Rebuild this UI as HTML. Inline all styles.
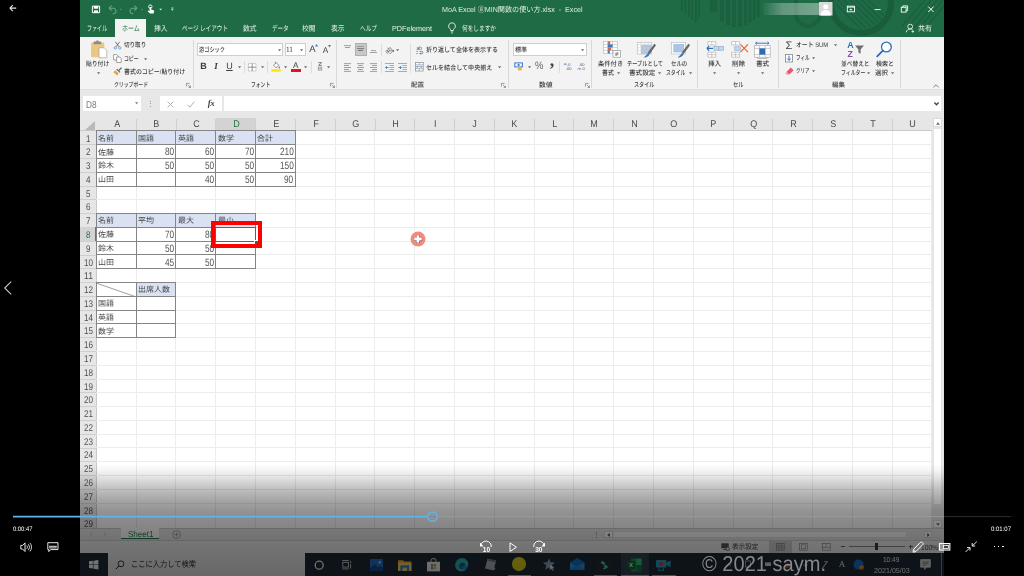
<!DOCTYPE html>
<html lang="ja"><head><meta charset="utf-8"><title>MoA Excel MIN関数の使い方</title>
<style>
html,body{margin:0;padding:0;background:#000;}
body{width:1024px;height:576px;overflow:hidden;position:relative;font-family:"Liberation Sans","Noto Sans CJK JP",sans-serif;}
#root{position:absolute;left:0;top:0;width:1024px;height:576px;overflow:hidden;background:#000;}
#v{position:absolute;left:80px;top:0;width:864px;height:576px;overflow:hidden;background:#fff;}
.a{position:absolute;}
.t{position:absolute;white-space:pre;line-height:1;text-rendering:geometricPrecision;}
svg{position:absolute;overflow:visible;}
</style></head><body><div id="root">
<div class="a" id="clip" style="left:80px;top:0;width:864px;height:576px;overflow:hidden;background:#fff"><div class="a" id="vid" style="left:-80px;top:0;width:1024px;height:576px;filter:blur(.5px)">
<div class="a" style="left:60px;top:-20px;width:904px;height:616px;background:#fff;"></div>
<div class="a" style="left:60px;top:-20px;width:904px;height:56.6px;background:#1f6b45;"></div>
<svg class="a" style="left:660px;top:0;overflow:hidden" width="284" height="36.600" viewBox="660 0 284 36.600"><defs><clipPath id="cc"><circle cx="861" cy="3" r="26"/></clipPath></defs><g fill="#1b6040"><rect x="681" y="0" width="1.600" height="11"/><rect x="684.500" y="0" width="1.600" height="14"/><rect x="688" y="0" width="1.600" height="17"/><rect x="691.500" y="0" width="1.600" height="20"/><rect x="695" y="0" width="1.600" height="23"/><rect x="698.300" y="0" width="1.600" height="18"/><rect x="710" y="0" width="7" height="12"/><rect x="720" y="0" width="4" height="21"/><rect x="726" y="0" width="4" height="25"/><rect x="732" y="0" width="4" height="27"/><rect x="738" y="0" width="4" height="27"/><rect x="744" y="0" width="3" height="25"/><rect x="748.500" y="0" width="3" height="23"/><rect x="753" y="0" width="2.500" height="20"/><rect x="757" y="0" width="2.500" height="17"/></g><path d="M796 0v14a12 12 0 0 0 24 0V0" fill="none" stroke="#1b6040" stroke-width="4"/><circle cx="861" cy="3" r="30" fill="none" stroke="#1a5d3d" stroke-width="6"/><g clip-path="url(#cc)" stroke="#1b6040" stroke-width="1.600"><path d="M850 -6l40 40M844 -6l40 40M838 -6l40 40M832 -6l40 40M826 -6l40 40M856 -6l40 40M862 -6l40 40"/></g><g stroke="#1b6040" stroke-width="1.400"><path d="M925 0L902 26M931 0l-24 28M937 0l-23 28M943 0l-22 26M949 0l-20 24"/></g></svg>
<svg class="a" style="left:88px;top:2px" width="100" height="16" viewBox="88 2 100 16"><path d="M92.400 6.100h7.200v6.600h-7.200z" fill="none" stroke="#fff" stroke-width="1"/><rect x="93.800" y="6.100" width="4.400" height="2.600" fill="#fff"/><rect x="94" y="10.400" width="4" height="2.300" fill="#fff"/><path d="M109 8.2l2.6-2.6M109 8.2l2.6 2.4M109.3 8.2h4.6a2.9 2.9 0 0 1 0 5.6h-1.2" fill="none" stroke="#6aa588" stroke-width="1.1"/><path d="M120 9l1 1.2 1-1.2z" fill="#6aa588"/><path d="M137 8.2l-2.6-2.6M137 8.2l-2.6 2.4M136.7 8.2h-4.6a2.9 2.9 0 0 0 0 5.6h1.2" fill="none" stroke="#6aa588" stroke-width="1.1"/><path d="M141 9l1 1.2 1-1.2z" fill="#6aa588"/><circle cx="150.3" cy="6.6" r="1.7" fill="none" stroke="#fff" stroke-width="0.9"/><path d="M149.6 7v4l-1.4-.6-.5.8 2.3 2.4h3.6l.6-3-3-1.1V7z" fill="#fff"/><path d="M159.2 8.8l1.4 1.5 1.4-1.5z" fill="#fff"/><path d="M171 8h2.6" stroke="#dfe" stroke-width="0.7"/><path d="M171 9.2l1.3 1.5 1.3-1.5z" fill="#e8f3ec"/></svg>
<span class="t" style="top:5.9px;font-size:7.4px;color:#dcebe2;left:441.55px;transform:scaleX(0.964);transform-origin:0 50%;">MoA Excel ⑧MIN関数の使い方.xlsx  -  Excel</span>
<div class="a" style="left:763px;top:2.5px;width:56px;height:12.5px;background:linear-gradient(90deg,rgba(255,255,255,0.04),rgba(255,255,255,0.30) 35%,rgba(255,255,255,0.40));filter:blur(0.6px)"></div>
<svg class="a" style="left:819px;top:2px" width="13.5" height="13.5" viewBox="0 0 27 27"><rect width="27" height="27" fill="#d9d9d9"/><circle cx="13.5" cy="9.500" r="5" fill="#fff"/><path d="M3.500 27c0-8 4-11 10-11s10 3 10 11z" fill="#fff"/></svg>
<svg class="a" style="left:840px;top:2px" width="104" height="16" viewBox="840 2 104 16"><rect x="847.3" y="6.2" width="7.2" height="5.6" fill="none" stroke="#fff" stroke-width="0.9"/><path d="M849.2 10.3l1.7-1.9 1.7 1.9z" fill="#fff"/><path d="M847.3 7.2h7.2" stroke="#fff" stroke-width="0.8"/><path d="M874.6 9.6h6" stroke="#fff" stroke-width="0.9"/><rect x="901.3" y="7.3" width="4.8" height="4.8" fill="none" stroke="#fff" stroke-width="0.9"/><path d="M902.8 7.3v-1.4h4.8v4.8h-1.5" fill="none" stroke="#fff" stroke-width="0.9"/><path d="M928.2 6.6l5.4 5.4M933.6 6.6l-5.4 5.4" stroke="#fff" stroke-width="1"/></svg>
<div class="a" style="left:114.8px;top:19.4px;width:31.3px;height:17.4px;background:#f3f3f3;"></div>
<span class="t" style="top:25px;font-size:7.4px;color:#e6f1ea;left:87.00px;transform:scaleX(0.683);transform-origin:0 50%;">ファイル</span>
<span class="t" style="top:25px;font-size:7.4px;color:#1f6b45;left:121.60px;transform:scaleX(0.811);transform-origin:0 50%;">ホーム</span>
<span class="t" style="top:25px;font-size:7.4px;color:#e6f1ea;left:154.00px;transform:scaleX(0.919);transform-origin:0 50%;">挿入</span>
<span class="t" style="top:25px;font-size:7.4px;color:#e6f1ea;left:182.00px;transform:scaleX(0.754);transform-origin:0 50%;">ページ レイアウト</span>
<span class="t" style="top:25px;font-size:7.4px;color:#e6f1ea;left:242.50px;transform:scaleX(0.919);transform-origin:0 50%;">数式</span>
<span class="t" style="top:25px;font-size:7.4px;color:#e6f1ea;left:271.50px;transform:scaleX(0.748);transform-origin:0 50%;">データ</span>
<span class="t" style="top:25px;font-size:7.4px;color:#e6f1ea;left:302.00px;transform:scaleX(0.919);transform-origin:0 50%;">校閲</span>
<span class="t" style="top:25px;font-size:7.4px;color:#e6f1ea;left:331.00px;transform:scaleX(0.919);transform-origin:0 50%;">表示</span>
<span class="t" style="top:25px;font-size:7.4px;color:#e6f1ea;left:359.50px;transform:scaleX(0.766);transform-origin:0 50%;">ヘルプ</span>
<span class="t" style="top:25px;font-size:7.4px;color:#e6f1ea;left:391.50px;transform:scaleX(0.974);transform-origin:0 50%;">PDFelement</span>
<svg class="a" style="left:447px;top:22px" width="10" height="12" viewBox="0 0 10 12"><path d="M5 .8a3.3 3.3 0 0 0-2 6c.5.5.7 1 .7 1.7h2.6c0-.7.2-1.2.7-1.700A3.300 3.300 0 0 0 5 .8z" fill="none" stroke="#fff" stroke-width="0.8"/><path d="M3.800 9.800h2.400M4.200 11h1.600" stroke="#fff" stroke-width="0.7"/></svg>
<span class="t" style="top:25px;font-size:7.4px;color:#e6f1ea;left:462.40px;transform:scaleX(0.766);transform-origin:0 50%;">何をしますか</span>
<svg class="a" style="left:905px;top:23px" width="10" height="10" viewBox="0 0 10 10"><circle cx="5.2" cy="3.6" r="2.4" fill="none" stroke="#fff" stroke-width="0.8"/><path d="M1.300 9.300c.3-2.200 1.800-3.300 3.900-3.300 1 0 1.700.2 2.300.6" fill="none" stroke="#fff" stroke-width="0.8"/><path d="M7.800 7.200v2.600M6.500 8.500h2.600" stroke="#fff" stroke-width="0.7"/></svg>
<span class="t" style="top:25px;font-size:7.4px;color:#e6f1ea;left:918.00px;transform:scaleX(0.946);transform-origin:0 50%;">共有</span>
<div class="a" style="left:60px;top:36.6px;width:904px;height:52.2px;background:#f3f3f3;"></div>
<div class="a" style="left:60px;top:88.8px;width:904px;height:1px;background:#e0e0e0;"></div>
<div class="a" style="left:192.6px;top:39.5px;width:0.9px;height:48px;background:#d9d9d9;"></div>
<div class="a" style="left:336.1px;top:39.5px;width:0.9px;height:48px;background:#d9d9d9;"></div>
<div class="a" style="left:508.1px;top:39.5px;width:0.9px;height:48px;background:#d9d9d9;"></div>
<div class="a" style="left:591.4px;top:39.5px;width:0.9px;height:48px;background:#d9d9d9;"></div>
<div class="a" style="left:697px;top:39.5px;width:0.9px;height:48px;background:#d9d9d9;"></div>
<div class="a" style="left:777.6px;top:39.5px;width:0.9px;height:48px;background:#d9d9d9;"></div>
<div class="a" style="left:900px;top:39.5px;width:0.9px;height:48px;background:#d9d9d9;"></div>
<svg class="a" style="left:90px;top:40px" width="18" height="20" viewBox="0 0 18 20"><rect x="1" y="2.600" width="13.200" height="14.600" rx=".8" fill="#ecc682"/><rect x="3.600" y="1.600" width="7.600" height="2.600" rx=".5" fill="#8a8a8a"/><rect x="6.200" y=".6" width="2.400" height="1.600" rx=".5" fill="#8a8a8a"/><path d="M9 7.800h5.200l2.600 2.600v7.400H9z" fill="#fff" stroke="#a2a2a2" stroke-width=".7"/></svg>
<span class="t" style="top:61.9px;font-size:6.6px;color:#3b3b3b;font-weight:500;left:85.80px;transform:scaleX(0.880);transform-origin:0 50%;">貼り付け</span>
<svg class="a" style="left:97.4px;top:71.7px" width="3.200" height="2.400" viewBox="0 0 4 3"><path d="M0 .4h4L2 2.800z" fill="#6a6a6a"/></svg>
<svg class="a" style="left:112.500px;top:40.500px" width="9" height="9" viewBox="0 0 9 9"><path d="M2.400 .8l3.600 5M6.600 .8L3 5.800" stroke="#555" stroke-width=".8" fill="none"/><circle cx="2.300" cy="6.900" r="1.200" fill="none" stroke="#4a86c8" stroke-width=".7"/><circle cx="6.700" cy="6.900" r="1.200" fill="none" stroke="#4a86c8" stroke-width=".7"/></svg>
<span class="t" style="top:43px;font-size:6.6px;color:#3b3b3b;font-weight:500;left:123.50px;transform:scaleX(0.842);transform-origin:0 50%;">切り取り</span>
<svg class="a" style="left:113px;top:54px" width="9" height="9" viewBox="0 0 9 9"><path d="M.6.600h3.200l1.400 1.400v4H.6z" fill="#fff" stroke="#7d7d7d" stroke-width=".7"/><path d="M3.600 3h3.200l1.400 1.400v4.100H3.600z" fill="#fff" stroke="#7d7d7d" stroke-width=".7"/></svg>
<span class="t" style="top:56.6px;font-size:6.6px;color:#3b3b3b;font-weight:500;left:123.50px;transform:scaleX(0.733);transform-origin:0 50%;">コピー</span>
<svg class="a" style="left:144px;top:57.5px" width="3.200" height="2.400" viewBox="0 0 4 3"><path d="M0 .4h4L2 2.800z" fill="#6a6a6a"/></svg>
<svg class="a" style="left:113px;top:67px" width="10" height="9" viewBox="0 0 10 9"><path d="M5.600 3.600l3-3" stroke="#555" stroke-width="1.200"/><path d="M2.200 3.200l3.600 3.300-1.600 1.900L.4 5.200z" fill="#e8a33d"/><path d="M3.200 2.600l3.400 3.200.9-.9-3.400-3.200z" fill="#666"/></svg>
<span class="t" style="top:70.2px;font-size:6.6px;color:#3b3b3b;font-weight:500;left:123.50px;transform:scaleX(0.903);transform-origin:0 50%;">書式のコピー/貼り付け</span>
<span class="t" style="top:82.7px;font-size:6.6px;color:#3b3b3b;font-weight:500;left:114.00px;transform:scaleX(0.737);transform-origin:0 50%;">クリップボード</span>
<svg class="a" style="left:185.5px;top:83px" width="5" height="5" viewBox="0 0 5 5"><path d="M.4 3.600V.4h3.200" fill="none" stroke="#777" stroke-width=".7"/><path d="M1.800 1.800l2.600 2.600M4.500 2.600v1.900H2.600" fill="none" stroke="#777" stroke-width=".7"/></svg>
<div class="a" style="left:197.1px;top:42.6px;width:85.9px;height:13.7px;background:#fff;box-sizing:border-box;border:.8px solid #cfcfcf;"></div>
<div class="a" style="left:284.7px;top:42.6px;width:21.6px;height:13.7px;background:#fff;box-sizing:border-box;border:.8px solid #cfcfcf;"></div>
<span class="t" style="top:47.8px;font-size:6.6px;color:#3b3b3b;font-weight:500;left:199.00px;transform:scaleX(0.789);transform-origin:0 50%;">游ゴシック</span>
<svg class="a" style="left:277.6px;top:48.5px" width="3.200" height="2.400" viewBox="0 0 4 3"><path d="M0 .4h4L2 2.800z" fill="#6a6a6a"/></svg>
<span class="t" style="top:45.8px;font-size:8px;color:#333;font-family:'Liberation Serif',serif;left:286.20px;transform:scaleX(0.909);transform-origin:0 50%;">11</span>
<svg class="a" style="left:300.4px;top:48.5px" width="3.200" height="2.400" viewBox="0 0 4 3"><path d="M0 .4h4L2 2.800z" fill="#6a6a6a"/></svg>
<span class="t" style="top:45.25px;font-size:9.5px;color:#444;left:309.23px;">A</span>
<svg class="a" style="left:315.400px;top:44.300px" width="3" height="2.500" viewBox="0 0 3 2.500"><path d="M0 2.500h3L1.500 0z" fill="#3d7dc4"/></svg>
<span class="t" style="top:46.35px;font-size:8.3px;color:#444;left:322.83px;">A</span>
<svg class="a" style="left:328.200px;top:44.600px" width="3" height="2.500" viewBox="0 0 3 2.500"><path d="M0 0h3L1.500 2.500z" fill="#3d7dc4"/></svg>
<span class="t" style="top:62.4px;font-size:9px;color:#3b3b3b;font-weight:bold;left:200.15px;">B</span>
<span class="t" style="top:62.4px;font-size:9px;color:#3b3b3b;font-weight:bold;font-family:'Liberation Serif',serif;left:214.24px;font-style:italic;">I</span>
<span class="t" style="top:62.2px;font-size:9px;color:#3b3b3b;left:226.15px;text-decoration:underline;">U</span>
<svg class="a" style="left:237.7px;top:65.9px" width="3.200" height="2.400" viewBox="0 0 4 3"><path d="M0 .4h4L2 2.800z" fill="#6a6a6a"/></svg>
<div class="a" style="left:244.1px;top:61px;width:0.9px;height:12px;background:#dcdcdc;"></div>
<svg class="a" style="left:248.300px;top:62.600px" width="8.400" height="8.400" viewBox="0 0 8.400 8.400"><rect x=".4" y=".4" width="7.600" height="7.600" fill="#fff" stroke="#9b9b9b" stroke-width=".7" stroke-dasharray="1 .6"/><path d="M4.200.4v7.600M.4 4.200h7.600" stroke="#666" stroke-width=".7"/></svg>
<svg class="a" style="left:261px;top:65.9px" width="3.200" height="2.400" viewBox="0 0 4 3"><path d="M0 .4h4L2 2.800z" fill="#6a6a6a"/></svg>
<div class="a" style="left:267.3px;top:61px;width:0.9px;height:12px;background:#dcdcdc;"></div>
<svg class="a" style="left:270.600px;top:61px" width="10" height="11" viewBox="0 0 10 11"><path d="M2.600 4.200L5.200 1.600l2.600 2.800-2.700 2.400z" fill="#fff" stroke="#666" stroke-width=".7"/><path d="M4.300 2.300V.7" stroke="#666" stroke-width=".7"/><path d="M8.300 5.200c.5.800.8 1.200.8 1.600a.8.800 0 0 1-1.600 0c0-.4.300-.8.800-1.600z" fill="#3d7dc4"/><rect x=".3" y="8.200" width="9.400" height="2.500" fill="#ffe500"/></svg>
<svg class="a" style="left:283.9px;top:65.9px" width="3.200" height="2.400" viewBox="0 0 4 3"><path d="M0 .4h4L2 2.800z" fill="#6a6a6a"/></svg>
<span class="t" style="top:62.2px;font-size:8.2px;color:#444;left:293.07px;">A</span>
<div class="a" style="left:291px;top:69.2px;width:9.5px;height:2.5px;background:#e81123;"></div>
<svg class="a" style="left:304.2px;top:65.9px" width="3.200" height="2.400" viewBox="0 0 4 3"><path d="M0 .4h4L2 2.800z" fill="#6a6a6a"/></svg>
<div class="a" style="left:310.9px;top:61px;width:0.9px;height:12px;background:#dcdcdc;"></div>
<svg class="a" style="left:316.500px;top:62px" width="6" height="9.500" viewBox="0 0 6 9.500"><path d="M1.200.6h3.400L1.600 3.400h3.200" fill="none" stroke="#555" stroke-width=".7"/><path d="M.8 5.200h4.400M.8 6.600h4.400M.8 8h4.400M1.600 4.800v4M4.400 4.800v4" stroke="#8a8a8a" stroke-width=".6"/></svg>
<svg class="a" style="left:327.1px;top:65.9px" width="3.200" height="2.400" viewBox="0 0 4 3"><path d="M0 .4h4L2 2.800z" fill="#6a6a6a"/></svg>
<span class="t" style="top:82.7px;font-size:6.6px;color:#3b3b3b;font-weight:500;left:250.60px;transform:scaleX(0.728);transform-origin:0 50%;">フォント</span>
<svg class="a" style="left:329.5px;top:83px" width="5" height="5" viewBox="0 0 5 5"><path d="M.4 3.600V.4h3.200" fill="none" stroke="#777" stroke-width=".7"/><path d="M1.800 1.800l2.600 2.600M4.500 2.600v1.900H2.600" fill="none" stroke="#777" stroke-width=".7"/></svg>
<svg class="a" style="left:344px;top:45.2px" width="7" height="4.8" viewBox="0 0 7 4.8"><rect x="0" y="0.3" width="7" height=".8" fill="#8a8a8a"/><rect x="1" y="2.2" width="5" height=".8" fill="#8a8a8a"/></svg>
<div class="a" style="left:354.7px;top:43.4px;width:12.3px;height:13px;background:#c8c8c8;box-sizing:border-box;border:.7px solid #b0b0b0;"></div>
<svg class="a" style="left:357.4px;top:48px" width="7" height="4.8" viewBox="0 0 7 4.8"><rect x="0" y="0.3" width="7" height=".8" fill="#666"/><rect x="1" y="2.2" width="5" height=".8" fill="#666"/></svg>
<div class="a" style="left:357.4px;top:46.3px;width:7px;height:0.7px;background:#9a9a9a;"></div>
<svg class="a" style="left:370px;top:50.3px" width="7" height="4.8" viewBox="0 0 7 4.8"><rect x="1" y="0.3" width="5" height=".8" fill="#8a8a8a"/><rect x="0" y="2.2" width="7" height=".8" fill="#8a8a8a"/></svg>
<div class="a" style="left:381.2px;top:43.5px;width:0.9px;height:12.5px;background:#dcdcdc;"></div>
<svg class="a" style="left:384.500px;top:44.500px" width="10" height="10" viewBox="0 0 10 10"><text x="1" y="8" font-size="6.400" fill="#555" transform="rotate(-38 3 7)" font-family="Liberation Sans, sans-serif">ab</text><path d="M4.600 9.200l4-4M8.600 5.200l-2 .2M8.600 5.200l-.2 2" stroke="#555" stroke-width=".7" fill="none"/></svg>
<svg class="a" style="left:396.1px;top:48.5px" width="3.200" height="2.400" viewBox="0 0 4 3"><path d="M0 .4h4L2 2.800z" fill="#6a6a6a"/></svg>
<div class="a" style="left:410.3px;top:43.5px;width:0.9px;height:29.5px;background:#dcdcdc;"></div>
<svg class="a" style="left:344px;top:63px" width="7" height="10.5" viewBox="0 0 7 10.5"><rect x="0" y="0.3" width="7" height=".8" fill="#8a8a8a"/><rect x="0" y="2.2" width="5" height=".8" fill="#8a8a8a"/><rect x="0" y="4.1" width="7" height=".8" fill="#8a8a8a"/><rect x="0" y="6" width="5" height=".8" fill="#8a8a8a"/><rect x="0" y="7.9" width="7" height=".8" fill="#8a8a8a"/></svg>
<svg class="a" style="left:357.4px;top:63px" width="7" height="10.5" viewBox="0 0 7 10.5"><rect x="0" y="0.3" width="7" height=".8" fill="#8a8a8a"/><rect x="1.2" y="2.2" width="4.6" height=".8" fill="#8a8a8a"/><rect x="0" y="4.1" width="7" height=".8" fill="#8a8a8a"/><rect x="1.2" y="6" width="4.6" height=".8" fill="#8a8a8a"/><rect x="0" y="7.9" width="7" height=".8" fill="#8a8a8a"/></svg>
<svg class="a" style="left:370px;top:63px" width="7" height="10.5" viewBox="0 0 7 10.5"><rect x="0" y="0.3" width="7" height=".8" fill="#8a8a8a"/><rect x="2" y="2.2" width="5" height=".8" fill="#8a8a8a"/><rect x="0" y="4.1" width="7" height=".8" fill="#8a8a8a"/><rect x="2" y="6" width="5" height=".8" fill="#8a8a8a"/><rect x="0" y="7.9" width="7" height=".8" fill="#8a8a8a"/></svg>
<div class="a" style="left:381.2px;top:61px;width:0.9px;height:12px;background:#dcdcdc;"></div>
<svg class="a" style="left:385px;top:62.500px" width="9" height="9" viewBox="0 0 9 9"><path d="M0 .5h9M4.500 2.500H9M4.500 4.500H9M4.500 6.500H9M0 8.500h9" stroke="#8a8a8a" stroke-width=".7"/><path d="M3.600 4.500H.6M.6 4.500l1.500-1.400M.6 4.500l1.500 1.400" stroke="#2b6cb8" stroke-width=".8" fill="none"/></svg>
<svg class="a" style="left:398.400px;top:62.500px" width="9" height="9" viewBox="0 0 9 9"><path d="M0 .5h9M4.500 2.500H9M4.500 4.500H9M4.500 6.500H9M0 8.500h9" stroke="#8a8a8a" stroke-width=".7"/><path d="M.4 4.500h3M3.400 4.500L1.900 3.100M3.400 4.500L1.900 5.900" stroke="#2b6cb8" stroke-width=".8" fill="none"/></svg>
<svg class="a" style="left:416px;top:44.500px" width="8" height="10" viewBox="0 0 8 10"><text x=".4" y="4.600" font-size="5" fill="#555" font-family="Liberation Sans, sans-serif">ab</text><path d="M.4 6.400h1.400M.4 8.600h1.400" stroke="#555" stroke-width=".7"/><path d="M3.400 6.400h2.400a1.100 1.100 0 0 1 0 2.200H4" fill="none" stroke="#2b6cb8" stroke-width=".7"/><path d="M4.800 7.600l-1 1 1 1" fill="none" stroke="#2b6cb8" stroke-width=".7"/></svg>
<span class="t" style="top:48.3px;font-size:6.6px;color:#3b3b3b;font-weight:500;left:426.00px;transform:scaleX(0.912);transform-origin:0 50%;">折り返して全体を表示する</span>
<svg class="a" style="left:415px;top:62px" width="8.600" height="9.400" viewBox="0 0 8.600 9.400"><rect x=".4" y=".4" width="7.800" height="8.600" fill="#fff" stroke="#8a8a8a" stroke-width=".7"/><path d="M.4 2.800h7.800M.4 6.600h7.800M4.300.4v2.400M4.300 6.600V9" stroke="#8a8a8a" stroke-width=".6"/><path d="M1.400 4.700h5.800M1.400 4.700l1-1M1.400 4.700l1 1M7.200 4.700l-1-1M7.200 4.700l-1 1" stroke="#2b6cb8" stroke-width=".6" fill="none"/></svg>
<span class="t" style="top:65.5px;font-size:6.6px;color:#3b3b3b;font-weight:500;left:426.00px;transform:scaleX(0.916);transform-origin:0 50%;">セルを結合して中央揃え</span>
<svg class="a" style="left:498.2px;top:65.9px" width="3.200" height="2.400" viewBox="0 0 4 3"><path d="M0 .4h4L2 2.800z" fill="#6a6a6a"/></svg>
<span class="t" style="top:82.7px;font-size:6.6px;color:#3b3b3b;font-weight:500;left:411.00px;">配置</span>
<svg class="a" style="left:501.3px;top:83px" width="5" height="5" viewBox="0 0 5 5"><path d="M.4 3.600V.4h3.200" fill="none" stroke="#777" stroke-width=".7"/><path d="M1.800 1.800l2.600 2.600M4.500 2.600v1.900H2.600" fill="none" stroke="#777" stroke-width=".7"/></svg>
<div class="a" style="left:513.3px;top:42.7px;width:74px;height:13.5px;background:#fff;box-sizing:border-box;border:.8px solid #cfcfcf;"></div>
<span class="t" style="top:47.8px;font-size:6.6px;color:#3b3b3b;font-weight:500;left:515.20px;transform:scaleX(0.925);transform-origin:0 50%;">標準</span>
<svg class="a" style="left:581.4px;top:48.5px" width="3.200" height="2.400" viewBox="0 0 4 3"><path d="M0 .4h4L2 2.800z" fill="#6a6a6a"/></svg>
<svg class="a" style="left:514.400px;top:62.400px" width="10" height="9" viewBox="0 0 10 9"><rect x=".3" y=".4" width="8.600" height="5" fill="#3b78c4"/><rect x="1.400" y="1.400" width="6.400" height="3" fill="#fff"/><circle cx="4.600" cy="2.900" r="1.100" fill="#3b78c4"/><ellipse cx="5.800" cy="6.200" rx="2.200" ry=".9" fill="#e9b24f"/><ellipse cx="5.800" cy="7.600" rx="2.200" ry=".9" fill="#e9b24f"/></svg>
<svg class="a" style="left:527.7px;top:65.9px" width="3.200" height="2.400" viewBox="0 0 4 3"><path d="M0 .4h4L2 2.800z" fill="#6a6a6a"/></svg>
<span class="t" style="top:61.3px;font-size:11px;color:#666;left:535.00px;transform:scaleX(0.859);transform-origin:0 50%;">%</span>
<span class="t" style="top:50.6px;font-size:18px;color:#444;font-weight:bold;font-family:'Liberation Serif',serif;left:549.75px;">,</span>
<div class="a" style="left:559.2px;top:61px;width:0.9px;height:12px;background:#dcdcdc;"></div>
<svg class="a" style="left:564px;top:62.400px" width="9" height="9" viewBox="0 0 9 9"><text x="3.200" y="3.600" font-size="4" fill="#555" font-family="Liberation Sans, sans-serif">.0</text><text x="1.800" y="8.200" font-size="4" fill="#555" font-family="Liberation Sans, sans-serif">.00</text><path d="M2.800 2.200H.4M.4 2.200l1-1M.4 2.200l1 1" stroke="#2b6cb8" stroke-width=".6" fill="none"/></svg>
<svg class="a" style="left:576.600px;top:62.400px" width="9" height="9" viewBox="0 0 9 9"><text x="1.800" y="3.600" font-size="4" fill="#555" font-family="Liberation Sans, sans-serif">.00</text><text x="4.400" y="8.200" font-size="4" fill="#555" font-family="Liberation Sans, sans-serif">.0</text><path d="M.4 6.800h3M3.400 6.800l-1-1M3.400 6.800l-1 1" stroke="#2b6cb8" stroke-width=".6" fill="none"/></svg>
<span class="t" style="top:82.7px;font-size:6.6px;color:#3b3b3b;font-weight:500;left:538.60px;transform:scaleX(1.031);transform-origin:0 50%;">数値</span>
<svg class="a" style="left:584.5px;top:83px" width="5" height="5" viewBox="0 0 5 5"><path d="M.4 3.600V.4h3.200" fill="none" stroke="#777" stroke-width=".7"/><path d="M1.800 1.800l2.600 2.600M4.500 2.600v1.900H2.600" fill="none" stroke="#777" stroke-width=".7"/></svg>
<svg class="a" style="left:603px;top:41px" width="18" height="17" viewBox="0 0 18 17"><rect x=".4" y=".4" width="14" height="12" fill="#fff" stroke="#b5b5b5" stroke-width=".6"/><path d="M.4 3.400h14M.4 6.400h14M.4 9.400h14M4.800.4v12M9.600.4v12" stroke="#b5b5b5" stroke-width=".6"/><rect x="4.800" y=".4" width="2.400" height="3" fill="#d8643a"/><rect x="4.800" y="3.400" width="4.800" height="3" fill="#3b78c4"/><rect x="4.800" y="6.400" width="3.400" height="3" fill="#d8643a"/><rect x="4.800" y="9.400" width="2" height="3" fill="#3b78c4"/><rect x="10" y="9.600" width="7.400" height="6.600" fill="#fff" stroke="#8a8a8a" stroke-width=".6"/><path d="M11.800 12.200h3.800M11.800 13.800h3.800M14.600 11l-1.800 4" stroke="#555" stroke-width=".6"/></svg>
<span class="t" style="top:61.6px;font-size:6.6px;color:#3b3b3b;font-weight:500;left:598.20px;transform:scaleX(0.955);transform-origin:0 50%;">条件付き</span>
<span class="t" style="top:70.8px;font-size:6.6px;color:#3b3b3b;font-weight:500;left:601.60px;transform:scaleX(0.895);transform-origin:0 50%;">書式</span>
<svg class="a" style="left:617.4px;top:71.7px" width="3.200" height="2.400" viewBox="0 0 4 3"><path d="M0 .4h4L2 2.800z" fill="#6a6a6a"/></svg>
<svg class="a" style="left:636.500px;top:41.500px" width="19" height="17" viewBox="0 0 19 17"><rect x=".4" y=".4" width="14.200" height="11.600" fill="#fff" stroke="#b5b5b5" stroke-width=".6"/><rect x="4" y="2.800" width="10.600" height="9.200" fill="#a9c6e8"/><path d="M.4 2.800h14.200M.4 5.800h14.200M.4 8.800h14.200M4 .4v11.600M7.600.4v11.600M11.200.4v11.600" stroke="#c9c9c9" stroke-width=".6"/><path d="M17.400 1.800l-6.600 8.600 1.800 1.600 6.400-8.800z" fill="#666"/><path d="M11.200 10.800l1.400 1.200c-.6 2.200-3 3.600-6 3.400 1.600-.8 2.800-2.400 4.600-4.600z" fill="#3b78c4"/></svg>
<span class="t" style="top:61.6px;font-size:6.6px;color:#3b3b3b;font-weight:500;left:626.65px;transform:scaleX(0.788);transform-origin:0 50%;">テーブルとして</span>
<span class="t" style="top:70.8px;font-size:6.6px;color:#3b3b3b;font-weight:500;left:629.00px;">書式設定</span>
<svg class="a" style="left:658.2px;top:71.7px" width="3.200" height="2.400" viewBox="0 0 4 3"><path d="M0 .4h4L2 2.800z" fill="#6a6a6a"/></svg>
<svg class="a" style="left:670.500px;top:41.500px" width="19" height="17" viewBox="0 0 19 17"><rect x=".4" y=".4" width="14.200" height="11.600" fill="#fff" stroke="#b5b5b5" stroke-width=".6"/><rect x="2.800" y="2.400" width="10" height="7.600" fill="#a9c6e8" stroke="#8aa9cf" stroke-width=".5"/><path d="M17.400 1.800l-6.600 8.600 1.800 1.600 6.400-8.800z" fill="#666"/><path d="M11.200 10.800l1.400 1.200c-.6 2.200-3 3.600-6 3.400 1.600-.8 2.800-2.400 4.600-4.600z" fill="#3b78c4"/></svg>
<span class="t" style="top:61.6px;font-size:6.6px;color:#3b3b3b;font-weight:500;left:671.30px;transform:scaleX(0.819);transform-origin:0 50%;">セルの</span>
<span class="t" style="top:70.8px;font-size:6.6px;color:#3b3b3b;font-weight:500;left:666.00px;transform:scaleX(0.739);transform-origin:0 50%;">スタイル</span>
<svg class="a" style="left:688.8px;top:71.7px" width="3.200" height="2.400" viewBox="0 0 4 3"><path d="M0 .4h4L2 2.800z" fill="#6a6a6a"/></svg>
<span class="t" style="top:82.7px;font-size:6.6px;color:#3b3b3b;font-weight:500;left:633.75px;transform:scaleX(0.777);transform-origin:0 50%;">スタイル</span>
<svg class="a" style="left:705.500px;top:41px" width="18" height="17" viewBox="0 0 18 17"><path d="M1.800.6h8v3.400h-8zM5.800.6v3.400M1.800 11.200h8v5h-8zM5.800 11.200v5M1.800 13.700h8" fill="#fff" stroke="#a8a8a8" stroke-width=".6"/><rect x="8" y="5.600" width="9.400" height="3.600" fill="#c5d9ef" stroke="#7f9fc6" stroke-width=".6"/><path d="M12.700 5.600v3.600" stroke="#7f9fc6" stroke-width=".6"/><path d="M7 7.400H.8M.8 7.400l2.400-2.400M.8 7.400l2.400 2.400" stroke="#2b6cb8" stroke-width="1.100" fill="none"/></svg>
<span class="t" style="top:61.7px;font-size:6.6px;color:#3b3b3b;font-weight:500;left:707.90px;">挿入</span>
<svg class="a" style="left:712.9px;top:71.7px" width="3.200" height="2.400" viewBox="0 0 4 3"><path d="M0 .4h4L2 2.800z" fill="#6a6a6a"/></svg>
<svg class="a" style="left:730.500px;top:41px" width="18" height="17" viewBox="0 0 18 17"><path d="M.6.600h8v3.400h-8zM4.600.6v3.400M.6 11.200h8v5h-8zM4.600 11.200v5M.6 13.700h8" fill="#fff" stroke="#a8a8a8" stroke-width=".6"/><rect x="3.800" y="5.800" width="5.400" height="3.400" fill="#c5d9ef" stroke="#7f9fc6" stroke-width=".6"/><path d="M9.400 3.400l7.600 7.800M17 3.400l-7.600 7.800" stroke="#e0622d" stroke-width="1.100"/></svg>
<span class="t" style="top:61.7px;font-size:6.6px;color:#3b3b3b;font-weight:500;left:731.90px;">削除</span>
<svg class="a" style="left:736.9px;top:71.7px" width="3.200" height="2.400" viewBox="0 0 4 3"><path d="M0 .4h4L2 2.800z" fill="#6a6a6a"/></svg>
<svg class="a" style="left:753.500px;top:40.500px" width="17" height="18" viewBox="0 0 17 18"><path d="M1.600 2.200h13.400M1.600 2.200l1.500-1.400M1.600 2.200l1.500 1.400M15 2.200l-1.500-1.400M15 2.200l-1.500 1.400" stroke="#2b6cb8" stroke-width=".9" fill="none"/><rect x=".6" y="4.600" width="15.600" height="11.600" fill="#fff" stroke="#a8a8a8" stroke-width=".6"/><path d="M.6 7.400h15.600M.6 13.600h15.600M5.400 4.600v11.600M11.200 4.600v11.600" stroke="#a8a8a8" stroke-width=".6"/><rect x="5.400" y="7.400" width="5.800" height="6.200" fill="#2b6cb8"/><path d="M3.600 16.200v1.200h9.400v-1.200" fill="none" stroke="#8a8a8a" stroke-width=".6"/></svg>
<span class="t" style="top:61.7px;font-size:6.6px;color:#3b3b3b;font-weight:500;left:755.90px;">書式</span>
<svg class="a" style="left:760.9px;top:71.7px" width="3.200" height="2.400" viewBox="0 0 4 3"><path d="M0 .4h4L2 2.800z" fill="#6a6a6a"/></svg>
<span class="t" style="top:82.7px;font-size:6.6px;color:#3b3b3b;font-weight:500;left:732.70px;transform:scaleX(0.804);transform-origin:0 50%;">セル</span>
<span class="t" style="top:41.3px;font-size:11px;color:#3a3a3a;left:785.59px;">Σ</span>
<span class="t" style="top:42.8px;font-size:6.6px;color:#3b3b3b;font-weight:500;left:795.50px;transform:scaleX(0.888);transform-origin:0 50%;">オート SUM</span>
<svg class="a" style="left:834.4px;top:44.3px" width="3.200" height="2.400" viewBox="0 0 4 3"><path d="M0 .4h4L2 2.800z" fill="#6a6a6a"/></svg>
<svg class="a" style="left:785px;top:53.800px" width="8" height="8.400" viewBox="0 0 8 8.400"><rect x=".4" y=".4" width="7.200" height="7.600" fill="#fff" stroke="#777" stroke-width=".7"/><path d="M4 1.600v4.600M4 6.400L2.200 4.600M4 6.400l1.800-1.800" stroke="#2b6cb8" stroke-width="1" fill="none"/></svg>
<span class="t" style="top:55.8px;font-size:6.6px;color:#3b3b3b;font-weight:500;left:795.50px;transform:scaleX(0.687);transform-origin:0 50%;">フィル</span>
<svg class="a" style="left:812px;top:57.1px" width="3.200" height="2.400" viewBox="0 0 4 3"><path d="M0 .4h4L2 2.800z" fill="#6a6a6a"/></svg>
<svg class="a" style="left:784.500px;top:66.500px" width="9" height="8" viewBox="0 0 9 8"><path d="M5.800.6l2.800 2.600-4.200 4.400L1.400 5z" fill="#e8566f"/><path d="M1.400 5l3 2.600-1 .2H1.600L.4 6.400z" fill="#f2a6b2"/></svg>
<span class="t" style="top:68.6px;font-size:6.6px;color:#3b3b3b;font-weight:500;left:795.50px;transform:scaleX(0.682);transform-origin:0 50%;">クリア</span>
<svg class="a" style="left:812px;top:69.9px" width="3.200" height="2.400" viewBox="0 0 4 3"><path d="M0 .4h4L2 2.800z" fill="#6a6a6a"/></svg>
<svg class="a" style="left:847px;top:40.500px" width="19" height="17" viewBox="0 0 19 17"><text x=".2" y="7.200" font-size="8.800" font-weight="bold" fill="#2b6cb8" font-family="Liberation Sans, sans-serif">A</text><text x=".6" y="15.600" font-size="8.800" font-weight="bold" fill="#8e4cb0" font-family="Liberation Sans, sans-serif">Z</text><path d="M8 4.600h9l-3.400 4v4.200l-2.200-1.200V8.600z" fill="#6f6f6f"/></svg>
<span class="t" style="top:61.7px;font-size:6.6px;color:#3b3b3b;font-weight:500;left:841.40px;transform:scaleX(0.867);transform-origin:0 50%;">並べ替えと</span>
<span class="t" style="top:70.8px;font-size:6.6px;color:#3b3b3b;font-weight:500;left:840.60px;transform:scaleX(0.743);transform-origin:0 50%;">フィルター</span>
<svg class="a" style="left:867.4px;top:71.7px" width="3.200" height="2.400" viewBox="0 0 4 3"><path d="M0 .4h4L2 2.800z" fill="#6a6a6a"/></svg>
<svg class="a" style="left:876px;top:41px" width="17" height="17" viewBox="0 0 17 17"><circle cx="10.400" cy="6" r="4.900" fill="#fff" stroke="#2b6cb8" stroke-width="1.300"/><path d="M6.800 9.600L1.200 15.400" stroke="#2b6cb8" stroke-width="1.800" stroke-linecap="round"/></svg>
<span class="t" style="top:61.7px;font-size:6.6px;color:#3b3b3b;font-weight:500;left:875.55px;transform:scaleX(0.905);transform-origin:0 50%;">検索と</span>
<span class="t" style="top:70.8px;font-size:6.6px;color:#3b3b3b;font-weight:500;left:875.00px;transform:scaleX(0.971);transform-origin:0 50%;">選択</span>
<svg class="a" style="left:891.1px;top:71.7px" width="3.200" height="2.400" viewBox="0 0 4 3"><path d="M0 .4h4L2 2.800z" fill="#6a6a6a"/></svg>
<span class="t" style="top:82.7px;font-size:6.6px;color:#3b3b3b;font-weight:500;left:832.00px;transform:scaleX(0.986);transform-origin:0 50%;">編集</span>
<svg class="a" style="left:933px;top:83.500px" width="6" height="4" viewBox="0 0 6 4"><path d="M.4 3.400L3 .8l2.600 2.600" fill="none" stroke="#666" stroke-width=".8"/></svg>
<div class="a" style="left:60px;top:89.8px;width:904px;height:42px;background:#e7e7e7;"></div>
<div class="a" style="left:83px;top:96.2px;width:58.2px;height:15.2px;background:#fff;"></div>
<span class="t" style="top:100.65px;font-size:9.9px;color:#787878;left:85.80px;transform:scaleX(0.840);transform-origin:0 50%;">D8</span>
<svg class="a" style="left:135px;top:102.1px" width="3.200" height="2.400" viewBox="0 0 4 3"><path d="M0 .4h4L2 2.800z" fill="#777"/></svg>
<div class="a" style="left:150px;top:100.6px;width:0.9px;height:0.9px;background:#9a9a9a;"></div>
<div class="a" style="left:150px;top:103.2px;width:0.9px;height:0.9px;background:#9a9a9a;"></div>
<div class="a" style="left:150px;top:105.8px;width:0.9px;height:0.9px;background:#9a9a9a;"></div>
<div class="a" style="left:159.7px;top:96.2px;width:61.9px;height:15.2px;background:#fff;"></div>
<svg class="a" style="left:166.500px;top:100.500px" width="7" height="7" viewBox="0 0 7 7"><path d="M.6.600l5.800 5.800M6.400.6L.6 6.400" stroke="#b0b0b0" stroke-width="1"/></svg>
<svg class="a" style="left:187px;top:100.500px" width="8" height="7" viewBox="0 0 8 7"><path d="M.6 3.800l2.200 2.400L7.400.6" fill="none" stroke="#b0b0b0" stroke-width="1"/></svg>
<span class="t" style="top:99.3px;font-size:9px;color:#444;font-weight:bold;font-family:'Liberation Serif',serif;left:207.65px;font-style:italic;letter-spacing:-.4px;">fx</span>
<div class="a" style="left:224px;top:96.2px;width:716.9px;height:15.2px;background:#fff;"></div>
<svg class="a" style="left:933.500px;top:102.300px" width="5" height="3.400" viewBox="0 0 5 3.400"><path d="M.4.500l2.100 2.200L4.600.5" fill="none" stroke="#444" stroke-width="1.300"/></svg>
<div class="a" style="left:60px;top:117.6px;width:872px;height:13.4px;background:#e6e6e6;"></div>
<svg class="a" style="left:85px;top:120.500px" width="10" height="9" viewBox="0 0 10 9"><path d="M10 0v9H0z" fill="#b9b9b9"/></svg>
<span class="t" style="top:120.55px;font-size:9.7px;color:#4a4a4a;left:113.59px;transform:translateY(-.6px) scaleX(.93);">A</span>
<div class="a" style="left:135.79px;top:118.5px;width:0.8px;height:12px;background:#cfcfcf;"></div>
<span class="t" style="top:120.55px;font-size:9.7px;color:#4a4a4a;left:153.38px;transform:translateY(-.6px) scaleX(.93);">B</span>
<div class="a" style="left:175.58px;top:118.5px;width:0.8px;height:12px;background:#cfcfcf;"></div>
<span class="t" style="top:120.55px;font-size:9.7px;color:#4a4a4a;left:192.92px;transform:translateY(-.6px) scaleX(.93);">C</span>
<div class="a" style="left:215.77px;top:117.6px;width:39.79px;height:13.4px;background:#d3d3d3;"></div>
<div class="a" style="left:215.77px;top:129.8px;width:39.79px;height:1.2px;background:#217346;"></div>
<div class="a" style="left:215.37px;top:118.5px;width:0.8px;height:12px;background:#cfcfcf;"></div>
<span class="t" style="top:120.55px;font-size:9.7px;color:#217346;left:232.71px;transform:translateY(-.6px) scaleX(.93);">D</span>
<div class="a" style="left:255.16px;top:118.5px;width:0.8px;height:12px;background:#cfcfcf;"></div>
<span class="t" style="top:120.55px;font-size:9.7px;color:#4a4a4a;left:272.75px;transform:translateY(-.6px) scaleX(.93);">E</span>
<div class="a" style="left:294.95px;top:118.5px;width:0.8px;height:12px;background:#cfcfcf;"></div>
<span class="t" style="top:120.55px;font-size:9.7px;color:#4a4a4a;left:312.79px;transform:translateY(-.6px) scaleX(.93);">F</span>
<div class="a" style="left:334.74px;top:118.5px;width:0.8px;height:12px;background:#cfcfcf;"></div>
<span class="t" style="top:120.55px;font-size:9.7px;color:#4a4a4a;left:351.83px;transform:translateY(-.6px) scaleX(.93);">G</span>
<div class="a" style="left:374.53px;top:118.5px;width:0.8px;height:12px;background:#cfcfcf;"></div>
<span class="t" style="top:120.55px;font-size:9.7px;color:#4a4a4a;left:391.87px;transform:translateY(-.6px) scaleX(.93);">H</span>
<div class="a" style="left:414.32px;top:118.5px;width:0.8px;height:12px;background:#cfcfcf;"></div>
<span class="t" style="top:120.55px;font-size:9.7px;color:#4a4a4a;left:433.66px;transform:translateY(-.6px) scaleX(.93);">I</span>
<div class="a" style="left:454.11px;top:118.5px;width:0.8px;height:12px;background:#cfcfcf;"></div>
<span class="t" style="top:120.55px;font-size:9.7px;color:#4a4a4a;left:472.45px;transform:translateY(-.6px) scaleX(.93);">J</span>
<div class="a" style="left:493.9px;top:118.5px;width:0.8px;height:12px;background:#cfcfcf;"></div>
<span class="t" style="top:120.55px;font-size:9.7px;color:#4a4a4a;left:511.49px;transform:translateY(-.6px) scaleX(.93);">K</span>
<div class="a" style="left:533.69px;top:118.5px;width:0.8px;height:12px;background:#cfcfcf;"></div>
<span class="t" style="top:120.55px;font-size:9.7px;color:#4a4a4a;left:551.78px;transform:translateY(-.6px) scaleX(.93);">L</span>
<div class="a" style="left:573.48px;top:118.5px;width:0.8px;height:12px;background:#cfcfcf;"></div>
<span class="t" style="top:120.55px;font-size:9.7px;color:#4a4a4a;left:590.32px;transform:translateY(-.6px) scaleX(.93);">M</span>
<div class="a" style="left:613.27px;top:118.5px;width:0.8px;height:12px;background:#cfcfcf;"></div>
<span class="t" style="top:120.55px;font-size:9.7px;color:#4a4a4a;left:630.61px;transform:translateY(-.6px) scaleX(.93);">N</span>
<div class="a" style="left:653.06px;top:118.5px;width:0.8px;height:12px;background:#cfcfcf;"></div>
<span class="t" style="top:120.55px;font-size:9.7px;color:#4a4a4a;left:670.15px;transform:translateY(-.6px) scaleX(.93);">O</span>
<div class="a" style="left:692.85px;top:118.5px;width:0.8px;height:12px;background:#cfcfcf;"></div>
<span class="t" style="top:120.55px;font-size:9.7px;color:#4a4a4a;left:710.44px;transform:translateY(-.6px) scaleX(.93);">P</span>
<div class="a" style="left:732.64px;top:118.5px;width:0.8px;height:12px;background:#cfcfcf;"></div>
<span class="t" style="top:120.55px;font-size:9.7px;color:#4a4a4a;left:749.73px;transform:translateY(-.6px) scaleX(.93);">Q</span>
<div class="a" style="left:772.43px;top:118.5px;width:0.8px;height:12px;background:#cfcfcf;"></div>
<span class="t" style="top:120.55px;font-size:9.7px;color:#4a4a4a;left:789.77px;transform:translateY(-.6px) scaleX(.93);">R</span>
<div class="a" style="left:812.22px;top:118.5px;width:0.8px;height:12px;background:#cfcfcf;"></div>
<span class="t" style="top:120.55px;font-size:9.7px;color:#4a4a4a;left:829.81px;transform:translateY(-.6px) scaleX(.93);">S</span>
<div class="a" style="left:852.01px;top:118.5px;width:0.8px;height:12px;background:#cfcfcf;"></div>
<span class="t" style="top:120.55px;font-size:9.7px;color:#4a4a4a;left:869.85px;transform:translateY(-.6px) scaleX(.93);">T</span>
<div class="a" style="left:891.8px;top:118.5px;width:0.8px;height:12px;background:#cfcfcf;"></div>
<span class="t" style="top:120.55px;font-size:9.7px;color:#4a4a4a;left:909.14px;transform:translateY(-.6px) scaleX(.93);">U</span>
<div class="a" style="left:96.4px;top:130.97px;width:836px;height:397.03px;background:#fff;"></div>
<div class="a" style="left:60px;top:130.97px;width:36.4px;height:397.03px;background:#e6e6e6;"></div>
<div class="a" style="left:95.8px;top:130.97px;width:0.8px;height:397.03px;background:#c9c9c9;"></div>
<div class="a" style="left:60px;top:130.47px;width:872px;height:0.8px;background:#c9c9c9;"></div>
<div class="a" style="left:60px;top:144.35px;width:36.4px;height:0.8px;background:#cfcfcf;"></div>
<span class="t" style="top:134.51px;font-size:9.8px;color:#505050;left:85.95px;transform:scaleX(0.825);transform-origin:0 50%;">1</span>
<div class="a" style="left:60px;top:158.13px;width:36.4px;height:0.8px;background:#cfcfcf;"></div>
<span class="t" style="top:148.29px;font-size:9.8px;color:#505050;left:85.95px;transform:scaleX(0.825);transform-origin:0 50%;">2</span>
<div class="a" style="left:60px;top:171.91px;width:36.4px;height:0.8px;background:#cfcfcf;"></div>
<span class="t" style="top:162.07px;font-size:9.8px;color:#505050;left:85.95px;transform:scaleX(0.825);transform-origin:0 50%;">3</span>
<div class="a" style="left:60px;top:185.69px;width:36.4px;height:0.8px;background:#cfcfcf;"></div>
<span class="t" style="top:175.85px;font-size:9.8px;color:#505050;left:85.95px;transform:scaleX(0.825);transform-origin:0 50%;">4</span>
<div class="a" style="left:60px;top:199.47px;width:36.4px;height:0.8px;background:#cfcfcf;"></div>
<span class="t" style="top:189.63px;font-size:9.8px;color:#505050;left:85.95px;transform:scaleX(0.825);transform-origin:0 50%;">5</span>
<div class="a" style="left:60px;top:213.25px;width:36.4px;height:0.8px;background:#cfcfcf;"></div>
<span class="t" style="top:203.41px;font-size:9.8px;color:#505050;left:85.95px;transform:scaleX(0.825);transform-origin:0 50%;">6</span>
<div class="a" style="left:60px;top:227.03px;width:36.4px;height:0.8px;background:#cfcfcf;"></div>
<span class="t" style="top:217.19px;font-size:9.8px;color:#505050;left:85.95px;transform:scaleX(0.825);transform-origin:0 50%;">7</span>
<div class="a" style="left:60px;top:227.43px;width:36.4px;height:13.78px;background:#d3d3d3;"></div>
<div class="a" style="left:95px;top:227.43px;width:1.4px;height:13.78px;background:#3f8a67;"></div>
<div class="a" style="left:60px;top:240.81px;width:36.4px;height:0.8px;background:#cfcfcf;"></div>
<span class="t" style="top:230.97px;font-size:9.8px;color:#217346;left:85.95px;transform:scaleX(0.825);transform-origin:0 50%;">8</span>
<div class="a" style="left:60px;top:254.59px;width:36.4px;height:0.8px;background:#cfcfcf;"></div>
<span class="t" style="top:244.75px;font-size:9.8px;color:#505050;left:85.95px;transform:scaleX(0.825);transform-origin:0 50%;">9</span>
<div class="a" style="left:60px;top:268.37px;width:36.4px;height:0.8px;background:#cfcfcf;"></div>
<span class="t" style="top:258.53px;font-size:9.8px;color:#505050;left:83.80px;transform:scaleX(0.825);transform-origin:0 50%;">10</span>
<div class="a" style="left:60px;top:282.15px;width:36.4px;height:0.8px;background:#cfcfcf;"></div>
<span class="t" style="top:272.31px;font-size:9.8px;color:#505050;left:83.80px;transform:scaleX(0.885);transform-origin:0 50%;">11</span>
<div class="a" style="left:60px;top:295.93px;width:36.4px;height:0.8px;background:#cfcfcf;"></div>
<span class="t" style="top:286.09px;font-size:9.8px;color:#505050;left:83.80px;transform:scaleX(0.825);transform-origin:0 50%;">12</span>
<div class="a" style="left:60px;top:309.71px;width:36.4px;height:0.8px;background:#cfcfcf;"></div>
<span class="t" style="top:299.87px;font-size:9.8px;color:#505050;left:83.80px;transform:scaleX(0.825);transform-origin:0 50%;">13</span>
<div class="a" style="left:60px;top:323.49px;width:36.4px;height:0.8px;background:#cfcfcf;"></div>
<span class="t" style="top:313.65px;font-size:9.8px;color:#505050;left:83.80px;transform:scaleX(0.825);transform-origin:0 50%;">14</span>
<div class="a" style="left:60px;top:337.27px;width:36.4px;height:0.8px;background:#cfcfcf;"></div>
<span class="t" style="top:327.43px;font-size:9.8px;color:#505050;left:83.80px;transform:scaleX(0.825);transform-origin:0 50%;">15</span>
<div class="a" style="left:60px;top:351.05px;width:36.4px;height:0.8px;background:#cfcfcf;"></div>
<span class="t" style="top:341.21px;font-size:9.8px;color:#505050;left:83.80px;transform:scaleX(0.825);transform-origin:0 50%;">16</span>
<div class="a" style="left:60px;top:364.83px;width:36.4px;height:0.8px;background:#cfcfcf;"></div>
<span class="t" style="top:354.99px;font-size:9.8px;color:#505050;left:83.80px;transform:scaleX(0.825);transform-origin:0 50%;">17</span>
<div class="a" style="left:60px;top:378.61px;width:36.4px;height:0.8px;background:#cfcfcf;"></div>
<span class="t" style="top:368.77px;font-size:9.8px;color:#505050;left:83.80px;transform:scaleX(0.825);transform-origin:0 50%;">18</span>
<div class="a" style="left:60px;top:392.39px;width:36.4px;height:0.8px;background:#cfcfcf;"></div>
<span class="t" style="top:382.55px;font-size:9.8px;color:#505050;left:83.80px;transform:scaleX(0.825);transform-origin:0 50%;">19</span>
<div class="a" style="left:60px;top:406.17px;width:36.4px;height:0.8px;background:#cfcfcf;"></div>
<span class="t" style="top:396.33px;font-size:9.8px;color:#505050;left:83.80px;transform:scaleX(0.825);transform-origin:0 50%;">20</span>
<div class="a" style="left:60px;top:419.95px;width:36.4px;height:0.8px;background:#cfcfcf;"></div>
<span class="t" style="top:410.11px;font-size:9.8px;color:#505050;left:83.80px;transform:scaleX(0.825);transform-origin:0 50%;">21</span>
<div class="a" style="left:60px;top:433.73px;width:36.4px;height:0.8px;background:#cfcfcf;"></div>
<span class="t" style="top:423.89px;font-size:9.8px;color:#505050;left:83.80px;transform:scaleX(0.825);transform-origin:0 50%;">22</span>
<div class="a" style="left:60px;top:447.51px;width:36.4px;height:0.8px;background:#cfcfcf;"></div>
<span class="t" style="top:437.67px;font-size:9.8px;color:#505050;left:83.80px;transform:scaleX(0.825);transform-origin:0 50%;">23</span>
<div class="a" style="left:60px;top:461.29px;width:36.4px;height:0.8px;background:#cfcfcf;"></div>
<span class="t" style="top:451.45px;font-size:9.8px;color:#505050;left:83.80px;transform:scaleX(0.825);transform-origin:0 50%;">24</span>
<div class="a" style="left:60px;top:475.07px;width:36.4px;height:0.8px;background:#cfcfcf;"></div>
<span class="t" style="top:465.23px;font-size:9.8px;color:#505050;left:83.80px;transform:scaleX(0.825);transform-origin:0 50%;">25</span>
<div class="a" style="left:60px;top:488.85px;width:36.4px;height:0.8px;background:#cfcfcf;"></div>
<span class="t" style="top:479.01px;font-size:9.8px;color:#505050;left:83.80px;transform:scaleX(0.825);transform-origin:0 50%;">26</span>
<div class="a" style="left:60px;top:502.63px;width:36.4px;height:0.8px;background:#cfcfcf;"></div>
<span class="t" style="top:492.79px;font-size:9.8px;color:#505050;left:83.80px;transform:scaleX(0.825);transform-origin:0 50%;">27</span>
<div class="a" style="left:60px;top:516.41px;width:36.4px;height:0.8px;background:#cfcfcf;"></div>
<span class="t" style="top:506.57px;font-size:9.8px;color:#505050;left:83.80px;transform:scaleX(0.825);transform-origin:0 50%;">28</span>
<div class="a" style="left:60px;top:530.19px;width:36.4px;height:0.8px;background:#cfcfcf;"></div>
<span class="t" style="top:520.35px;font-size:9.8px;color:#505050;left:83.80px;transform:scaleX(0.825);transform-origin:0 50%;">29</span>
<div class="a" style="left:135.69px;top:130.97px;width:1px;height:397.03px;background:#ececec;"></div>
<div class="a" style="left:175.48px;top:130.97px;width:1px;height:397.03px;background:#ececec;"></div>
<div class="a" style="left:215.27px;top:130.97px;width:1px;height:397.03px;background:#ececec;"></div>
<div class="a" style="left:255.06px;top:130.97px;width:1px;height:397.03px;background:#ececec;"></div>
<div class="a" style="left:294.85px;top:130.97px;width:1px;height:397.03px;background:#ececec;"></div>
<div class="a" style="left:334.64px;top:130.97px;width:1px;height:397.03px;background:#ececec;"></div>
<div class="a" style="left:374.43px;top:130.97px;width:1px;height:397.03px;background:#ececec;"></div>
<div class="a" style="left:414.22px;top:130.97px;width:1px;height:397.03px;background:#ececec;"></div>
<div class="a" style="left:454.01px;top:130.97px;width:1px;height:397.03px;background:#ececec;"></div>
<div class="a" style="left:493.8px;top:130.97px;width:1px;height:397.03px;background:#ececec;"></div>
<div class="a" style="left:533.59px;top:130.97px;width:1px;height:397.03px;background:#ececec;"></div>
<div class="a" style="left:573.38px;top:130.97px;width:1px;height:397.03px;background:#ececec;"></div>
<div class="a" style="left:613.17px;top:130.97px;width:1px;height:397.03px;background:#ececec;"></div>
<div class="a" style="left:652.96px;top:130.97px;width:1px;height:397.03px;background:#ececec;"></div>
<div class="a" style="left:692.75px;top:130.97px;width:1px;height:397.03px;background:#ececec;"></div>
<div class="a" style="left:732.54px;top:130.97px;width:1px;height:397.03px;background:#ececec;"></div>
<div class="a" style="left:772.33px;top:130.97px;width:1px;height:397.03px;background:#ececec;"></div>
<div class="a" style="left:812.12px;top:130.97px;width:1px;height:397.03px;background:#ececec;"></div>
<div class="a" style="left:851.91px;top:130.97px;width:1px;height:397.03px;background:#ececec;"></div>
<div class="a" style="left:891.7px;top:130.97px;width:1px;height:397.03px;background:#ececec;"></div>
<div class="a" style="left:931.49px;top:130.97px;width:1px;height:397.03px;background:#ececec;"></div>
<div class="a" style="left:96.4px;top:144.25px;width:836px;height:1px;background:#ececec;"></div>
<div class="a" style="left:96.4px;top:158.03px;width:836px;height:1px;background:#ececec;"></div>
<div class="a" style="left:96.4px;top:171.81px;width:836px;height:1px;background:#ececec;"></div>
<div class="a" style="left:96.4px;top:185.59px;width:836px;height:1px;background:#ececec;"></div>
<div class="a" style="left:96.4px;top:199.37px;width:836px;height:1px;background:#ececec;"></div>
<div class="a" style="left:96.4px;top:213.15px;width:836px;height:1px;background:#ececec;"></div>
<div class="a" style="left:96.4px;top:226.93px;width:836px;height:1px;background:#ececec;"></div>
<div class="a" style="left:96.4px;top:240.71px;width:836px;height:1px;background:#ececec;"></div>
<div class="a" style="left:96.4px;top:254.49px;width:836px;height:1px;background:#ececec;"></div>
<div class="a" style="left:96.4px;top:268.27px;width:836px;height:1px;background:#ececec;"></div>
<div class="a" style="left:96.4px;top:282.05px;width:836px;height:1px;background:#ececec;"></div>
<div class="a" style="left:96.4px;top:295.83px;width:836px;height:1px;background:#ececec;"></div>
<div class="a" style="left:96.4px;top:309.61px;width:836px;height:1px;background:#ececec;"></div>
<div class="a" style="left:96.4px;top:323.39px;width:836px;height:1px;background:#ececec;"></div>
<div class="a" style="left:96.4px;top:337.17px;width:836px;height:1px;background:#ececec;"></div>
<div class="a" style="left:96.4px;top:350.95px;width:836px;height:1px;background:#ececec;"></div>
<div class="a" style="left:96.4px;top:364.73px;width:836px;height:1px;background:#ececec;"></div>
<div class="a" style="left:96.4px;top:378.51px;width:836px;height:1px;background:#ececec;"></div>
<div class="a" style="left:96.4px;top:392.29px;width:836px;height:1px;background:#ececec;"></div>
<div class="a" style="left:96.4px;top:406.07px;width:836px;height:1px;background:#ececec;"></div>
<div class="a" style="left:96.4px;top:419.85px;width:836px;height:1px;background:#ececec;"></div>
<div class="a" style="left:96.4px;top:433.63px;width:836px;height:1px;background:#ececec;"></div>
<div class="a" style="left:96.4px;top:447.41px;width:836px;height:1px;background:#ececec;"></div>
<div class="a" style="left:96.4px;top:461.19px;width:836px;height:1px;background:#ececec;"></div>
<div class="a" style="left:96.4px;top:474.97px;width:836px;height:1px;background:#ececec;"></div>
<div class="a" style="left:96.4px;top:488.75px;width:836px;height:1px;background:#ececec;"></div>
<div class="a" style="left:96.4px;top:502.53px;width:836px;height:1px;background:#ececec;"></div>
<div class="a" style="left:96.4px;top:516.31px;width:836px;height:1px;background:#ececec;"></div>
<div class="a" style="left:96.4px;top:530.09px;width:836px;height:1px;background:#ececec;"></div>
<div class="a" style="left:96.4px;top:130.97px;width:198.95px;height:13.78px;background:#d9e1f2;"></div>
<div class="a" style="left:95.9px;top:130.47px;width:199.95px;height:1px;background:#858585;"></div>
<div class="a" style="left:95.9px;top:144.25px;width:199.95px;height:1px;background:#858585;"></div>
<div class="a" style="left:95.9px;top:158.03px;width:199.95px;height:1px;background:#858585;"></div>
<div class="a" style="left:95.9px;top:171.81px;width:199.95px;height:1px;background:#858585;"></div>
<div class="a" style="left:95.9px;top:185.59px;width:199.95px;height:1px;background:#858585;"></div>
<div class="a" style="left:95.9px;top:130.47px;width:1px;height:56.12px;background:#858585;"></div>
<div class="a" style="left:135.69px;top:130.47px;width:1px;height:56.12px;background:#858585;"></div>
<div class="a" style="left:175.48px;top:130.47px;width:1px;height:56.12px;background:#858585;"></div>
<div class="a" style="left:215.27px;top:130.47px;width:1px;height:56.12px;background:#858585;"></div>
<div class="a" style="left:255.06px;top:130.47px;width:1px;height:56.12px;background:#858585;"></div>
<div class="a" style="left:294.85px;top:130.47px;width:1px;height:56.12px;background:#858585;"></div>
<div class="a" style="left:96.4px;top:213.65px;width:159.16px;height:13.78px;background:#d9e1f2;"></div>
<div class="a" style="left:95.9px;top:213.15px;width:160.16px;height:1px;background:#858585;"></div>
<div class="a" style="left:95.9px;top:226.93px;width:160.16px;height:1px;background:#858585;"></div>
<div class="a" style="left:95.9px;top:240.71px;width:160.16px;height:1px;background:#858585;"></div>
<div class="a" style="left:95.9px;top:254.49px;width:160.16px;height:1px;background:#858585;"></div>
<div class="a" style="left:95.9px;top:268.27px;width:160.16px;height:1px;background:#858585;"></div>
<div class="a" style="left:95.9px;top:213.15px;width:1px;height:56.12px;background:#858585;"></div>
<div class="a" style="left:135.69px;top:213.15px;width:1px;height:56.12px;background:#858585;"></div>
<div class="a" style="left:175.48px;top:213.15px;width:1px;height:56.12px;background:#858585;"></div>
<div class="a" style="left:215.27px;top:213.15px;width:1px;height:56.12px;background:#858585;"></div>
<div class="a" style="left:255.06px;top:213.15px;width:1px;height:56.12px;background:#858585;"></div>
<div class="a" style="left:136.19px;top:282.55px;width:39.79px;height:13.78px;background:#d9e1f2;"></div>
<div class="a" style="left:95.9px;top:282.05px;width:80.58px;height:1px;background:#858585;"></div>
<div class="a" style="left:95.9px;top:295.83px;width:80.58px;height:1px;background:#858585;"></div>
<div class="a" style="left:95.9px;top:309.61px;width:80.58px;height:1px;background:#858585;"></div>
<div class="a" style="left:95.9px;top:323.39px;width:80.58px;height:1px;background:#858585;"></div>
<div class="a" style="left:95.9px;top:337.17px;width:80.58px;height:1px;background:#858585;"></div>
<div class="a" style="left:95.9px;top:282.05px;width:1px;height:56.12px;background:#858585;"></div>
<div class="a" style="left:135.69px;top:282.05px;width:1px;height:56.12px;background:#858585;"></div>
<div class="a" style="left:175.48px;top:282.05px;width:1px;height:56.12px;background:#858585;"></div>
<svg class="a" style="left:96.4px;top:282.55px" width="39.79" height="13.78"><path d="M0 0L39.79 13.78" stroke="#858585" stroke-width=".8"/></svg>
<span class="t" style="top:134.76px;font-size:7.7px;color:#484848;left:98.30px;transform:scaleX(1.040);transform-origin:0 50%;">名前</span>
<span class="t" style="top:134.76px;font-size:7.7px;color:#484848;left:138.09px;transform:scaleX(1.040);transform-origin:0 50%;">国語</span>
<span class="t" style="top:134.76px;font-size:7.7px;color:#484848;left:177.88px;transform:scaleX(1.040);transform-origin:0 50%;">英語</span>
<span class="t" style="top:134.76px;font-size:7.7px;color:#484848;left:217.67px;transform:scaleX(1.040);transform-origin:0 50%;">数学</span>
<span class="t" style="top:134.76px;font-size:7.7px;color:#484848;left:257.46px;transform:scaleX(1.040);transform-origin:0 50%;">合計</span>
<span class="t" style="top:148.54px;font-size:7.7px;color:#484848;left:98.30px;transform:scaleX(1.040);transform-origin:0 50%;">佐藤</span>
<span class="t" style="top:147.29px;font-size:10.7px;color:#555;left:165.08px;transform:scaleX(0.774);transform-origin:0 50%;">80</span>
<span class="t" style="top:147.29px;font-size:10.7px;color:#555;left:204.87px;transform:scaleX(0.774);transform-origin:0 50%;">60</span>
<span class="t" style="top:147.29px;font-size:10.7px;color:#555;left:244.66px;transform:scaleX(0.774);transform-origin:0 50%;">70</span>
<span class="t" style="top:147.29px;font-size:10.7px;color:#555;left:279.85px;transform:scaleX(0.773);transform-origin:0 50%;">210</span>
<span class="t" style="top:162.32px;font-size:7.7px;color:#484848;left:98.30px;transform:scaleX(1.040);transform-origin:0 50%;">鈴木</span>
<span class="t" style="top:161.07px;font-size:10.7px;color:#555;left:165.08px;transform:scaleX(0.774);transform-origin:0 50%;">50</span>
<span class="t" style="top:161.07px;font-size:10.7px;color:#555;left:204.87px;transform:scaleX(0.774);transform-origin:0 50%;">50</span>
<span class="t" style="top:161.07px;font-size:10.7px;color:#555;left:244.66px;transform:scaleX(0.774);transform-origin:0 50%;">50</span>
<span class="t" style="top:161.07px;font-size:10.7px;color:#555;left:279.85px;transform:scaleX(0.773);transform-origin:0 50%;">150</span>
<span class="t" style="top:176.1px;font-size:7.7px;color:#484848;left:98.30px;transform:scaleX(1.040);transform-origin:0 50%;">山田</span>
<span class="t" style="top:174.85px;font-size:10.7px;color:#555;left:204.87px;transform:scaleX(0.774);transform-origin:0 50%;">40</span>
<span class="t" style="top:174.85px;font-size:10.7px;color:#555;left:244.66px;transform:scaleX(0.774);transform-origin:0 50%;">50</span>
<span class="t" style="top:174.85px;font-size:10.7px;color:#555;left:284.45px;transform:scaleX(0.774);transform-origin:0 50%;">90</span>
<span class="t" style="top:217.44px;font-size:7.7px;color:#484848;left:98.30px;transform:scaleX(1.040);transform-origin:0 50%;">名前</span>
<span class="t" style="top:217.44px;font-size:7.7px;color:#484848;left:138.09px;transform:scaleX(1.040);transform-origin:0 50%;">平均</span>
<span class="t" style="top:217.44px;font-size:7.7px;color:#484848;left:177.88px;transform:scaleX(1.040);transform-origin:0 50%;">最大</span>
<span class="t" style="top:217.44px;font-size:7.7px;color:#484848;left:217.67px;transform:scaleX(1.040);transform-origin:0 50%;">最小</span>
<span class="t" style="top:231.22px;font-size:7.7px;color:#484848;left:98.30px;transform:scaleX(1.040);transform-origin:0 50%;">佐藤</span>
<span class="t" style="top:229.97px;font-size:10.7px;color:#555;left:165.08px;transform:scaleX(0.774);transform-origin:0 50%;">70</span>
<span class="t" style="top:229.97px;font-size:10.7px;color:#555;left:204.87px;transform:scaleX(0.774);transform-origin:0 50%;">80</span>
<span class="t" style="top:245px;font-size:7.7px;color:#484848;left:98.30px;transform:scaleX(1.040);transform-origin:0 50%;">鈴木</span>
<span class="t" style="top:243.75px;font-size:10.7px;color:#555;left:165.08px;transform:scaleX(0.774);transform-origin:0 50%;">50</span>
<span class="t" style="top:243.75px;font-size:10.7px;color:#555;left:204.87px;transform:scaleX(0.774);transform-origin:0 50%;">50</span>
<span class="t" style="top:258.78px;font-size:7.7px;color:#484848;left:98.30px;transform:scaleX(1.040);transform-origin:0 50%;">山田</span>
<span class="t" style="top:257.53px;font-size:10.7px;color:#555;left:165.08px;transform:scaleX(0.774);transform-origin:0 50%;">45</span>
<span class="t" style="top:257.53px;font-size:10.7px;color:#555;left:204.87px;transform:scaleX(0.774);transform-origin:0 50%;">50</span>
<span class="t" style="top:286.34px;font-size:7.7px;color:#484848;left:138.09px;transform:scaleX(1.040);transform-origin:0 50%;">出席人数</span>
<span class="t" style="top:300.12px;font-size:7.7px;color:#484848;left:98.30px;transform:scaleX(1.040);transform-origin:0 50%;">国語</span>
<span class="t" style="top:313.9px;font-size:7.7px;color:#484848;left:98.30px;transform:scaleX(1.040);transform-origin:0 50%;">英語</span>
<span class="t" style="top:327.68px;font-size:7.7px;color:#484848;left:98.30px;transform:scaleX(1.040);transform-origin:0 50%;">数学</span>
<div class="a" style="left:215.17px;top:226.83px;width:40.99px;height:14.98px;background:transparent;box-sizing:border-box;border:1.200px solid #2f7a56;"></div>
<div class="a" style="left:253.86px;top:239.51px;width:3px;height:3px;background:#217346;border:.6px solid #fff;"></div>
<div class="a" style="left:210.6px;top:220.7px;width:51.9px;height:27px;background:transparent;box-sizing:border-box;border:4.400px solid #ff0000;border-bottom-width:4px;"></div>
<svg class="a" style="left:409.800px;top:230.900px" width="16" height="16" viewBox="0 0 16 16"><circle cx="8" cy="8" r="7.500" fill="#f48a7e"/><path d="M8.200 4.300v7.800M4.300 8.200h7.800" stroke="#3a2a2a" stroke-width="3.400"/><path d="M8 4.200v7.600M4.200 8h7.600" stroke="#fff" stroke-width="2.800"/></svg>
<div class="a" style="left:932px;top:117.6px;width:32px;height:410.4px;background:#e6e6e6;"></div>
<div class="a" style="left:933.4px;top:118px;width:9px;height:9px;background:#fff;box-sizing:border-box;border:.7px solid #dadada;"></div>
<svg class="a" style="left:935.900px;top:121.500px" width="4" height="3" viewBox="0 0 4 3"><path d="M0 2.800h4L2 .2z" fill="#666"/></svg>
<div class="a" style="left:933.3px;top:127.8px;width:9.2px;height:377.2px;background:#fff;box-sizing:border-box;border:.6px solid #e4e4e4;"></div>
<div class="a" style="left:933.4px;top:520.4px;width:9px;height:8px;background:#fff;box-sizing:border-box;border:.7px solid #dadada;"></div>
<svg class="a" style="left:935.900px;top:523px" width="4" height="3" viewBox="0 0 4 3"><path d="M0 .2h4L2 2.800z" fill="#666"/></svg>
<div class="a" style="left:60px;top:528px;width:904px;height:12.4px;background:#e6e6e6;"></div>
<div class="a" style="left:60px;top:528px;width:904px;height:0.8px;background:#c9c9c9;"></div>
<svg class="a" style="left:89px;top:531.500px" width="18" height="5" viewBox="0 0 18 5"><path d="M3.600.4L1.400 2.500l2.200 2.100M14.600.4l2.200 2.100-2.200 2.100" fill="none" stroke="#bdbdbd" stroke-width=".9"/></svg>
<div class="a" style="left:121.3px;top:528px;width:38.2px;height:10.2px;background:#fff;"></div>
<div class="a" style="left:121.3px;top:537.6px;width:38.2px;height:1.4px;background:#217346;"></div>
<span class="t" style="top:529.9px;font-size:8.6px;color:#2a7a52;left:127.55px;transform:scaleX(0.936);transform-origin:0 50%;">Sheet1</span>
<svg class="a" style="left:172.300px;top:530px" width="9" height="9" viewBox="0 0 9 9"><circle cx="4.500" cy="4.500" r="3.900" fill="none" stroke="#8c8c8c" stroke-width=".7"/><path d="M4.500 2.400v4.200M2.400 4.500h4.200" stroke="#8c8c8c" stroke-width=".7"/></svg>
<div class="a" style="left:596.2px;top:531.8px;width:0.9px;height:0.9px;background:#8a8a8a;"></div>
<div class="a" style="left:596.2px;top:534.2px;width:0.9px;height:0.9px;background:#8a8a8a;"></div>
<div class="a" style="left:596.2px;top:536.6px;width:0.9px;height:0.9px;background:#8a8a8a;"></div>
<div class="a" style="left:604px;top:530.6px;width:8.5px;height:7.8px;background:#fff;box-sizing:border-box;border:.7px solid #d6d6d6;"></div>
<svg class="a" style="left:606.800px;top:532.500px" width="3" height="4" viewBox="0 0 3 4"><path d="M2.800 0v4L.2 2z" fill="#555"/></svg>
<div class="a" style="left:613.2px;top:530.6px;width:294.3px;height:7.8px;background:#fbfbfb;box-sizing:border-box;border:.7px solid #e2e2e2;"></div>
<div class="a" style="left:923.6px;top:530.6px;width:8.5px;height:7.8px;background:#fff;box-sizing:border-box;border:.7px solid #d6d6d6;"></div>
<svg class="a" style="left:926.600px;top:532.500px" width="3" height="4" viewBox="0 0 3 4"><path d="M.2 0v4l2.600-2z" fill="#555"/></svg>
<div class="a" style="left:60px;top:540.4px;width:904px;height:12.8px;background:#f1f1f1;"></div>
<div class="a" style="left:60px;top:540.2px;width:904px;height:0.7px;background:#d0d0d0;"></div>
<svg class="a" style="left:720.500px;top:542.500px" width="9" height="8" viewBox="0 0 9 8"><rect x=".3" y=".3" width="7.400" height="5" fill="#555"/><path d="M2.600 6.600h3" stroke="#555" stroke-width=".9"/><circle cx="6.800" cy="5.800" r="1.700" fill="#f1f1f1" stroke="#444" stroke-width=".7"/></svg>
<span class="t" style="top:544px;font-size:7px;color:#444;left:731.50px;transform:scaleX(0.946);transform-origin:0 50%;">表示設定</span>
<div class="a" style="left:769px;top:540.6px;width:23px;height:12.6px;background:#cfcfcf;"></div>
<svg class="a" style="left:775.500px;top:543px" width="8.600" height="7.600" viewBox="0 0 8.600 7.600"><rect x=".4" y=".4" width="7.800" height="6.800" fill="none" stroke="#808080" stroke-width=".7"/><path d="M.4 2.700h7.800M.4 4.900h7.800M3 .4v6.800M5.600.4v6.800" stroke="#808080" stroke-width=".6"/></svg>
<svg class="a" style="left:798.800px;top:543px" width="8.600" height="7.600" viewBox="0 0 8.600 7.600"><rect x=".4" y=".4" width="7.800" height="6.800" fill="none" stroke="#8c8c8c" stroke-width=".7"/><rect x="2.300" y="1.800" width="4" height="4" fill="none" stroke="#8c8c8c" stroke-width=".6"/></svg>
<svg class="a" style="left:821.800px;top:543px" width="8.600" height="7.600" viewBox="0 0 8.600 7.600"><rect x=".4" y=".4" width="7.800" height="6.800" fill="none" stroke="#8c8c8c" stroke-width=".7"/><path d="M.4 4.400h3.600V.4M4 4.400h4.200" fill="none" stroke="#8c8c8c" stroke-width=".6"/></svg>
<div class="a" style="left:841px;top:546.4px;width:4px;height:0.8px;background:#666;"></div>
<div class="a" style="left:849px;top:546.4px;width:56px;height:0.7px;background:#8a8a8a;"></div>
<div class="a" style="left:875.4px;top:543.2px;width:2.8px;height:7px;background:#3a3a3a;"></div>
<div class="a" style="left:908.5px;top:546.4px;width:4.2px;height:0.8px;background:#666;"></div>
<div class="a" style="left:910.2px;top:544.7px;width:0.8px;height:4.2px;background:#666;"></div>
<span class="t" style="top:544px;font-size:7.4px;color:#444;left:921.00px;transform:scaleX(0.899);transform-origin:0 50%;">100%</span>
<div class="a" style="left:60px;top:553.2px;width:904px;height:42.8px;background:#1d2b36;"></div>
<svg class="a" style="left:89.200px;top:560px" width="9.400" height="9.400" viewBox="0 0 9.400 9.400"><path d="M0 1.300L3.900.8v3.600H0zM4.500.7L9.400 0v4.400H4.500zM0 5h3.900v3.600L0 8.100zM4.500 5h4.900v4.400L4.500 8.700z" fill="#fff"/></svg>
<div class="a" style="left:108px;top:553.2px;width:197px;height:42.8px;background:#f0f0f0;"></div>
<svg class="a" style="left:114.500px;top:559.500px" width="10" height="10" viewBox="0 0 10 10"><circle cx="6" cy="3.800" r="2.900" fill="none" stroke="#222" stroke-width=".9"/><path d="M3.900 5.900L.8 9.200" stroke="#222" stroke-width="1"/></svg>
<span class="t" style="top:560.5px;font-size:8.2px;color:#2b2b2b;left:130.80px;transform:scaleX(0.885);transform-origin:0 50%;">ここに入力して検索</span>
<svg class="a" style="left:313.500px;top:559.500px" width="10.400" height="10.400" viewBox="0 0 10.400 10.400"><circle cx="5.200" cy="5.200" r="4" fill="none" stroke="#fff" stroke-width="1.300"/></svg>
<svg class="a" style="left:340.500px;top:560px" width="11" height="9.400" viewBox="0 0 11 9.400"><rect x="1.800" y="2.300" width="5.600" height="4.800" fill="none" stroke="#d8d8d8" stroke-width=".9"/><path d="M1.200.5h6.600M1.200 8.900h6.600M9.600.8v2.400M9.600 4.200v4.400" stroke="#d8d8d8" stroke-width=".9"/></svg>
<svg class="a" style="left:369.500px;top:558.500px" width="13" height="12" viewBox="0 0 13 12"><rect width="13" height="12" rx=".6" fill="#2a6fc4"/><path d="M0 9.200l4.400-4 3.800 3.200 2-1.600L13 9v3H0z" fill="#164a94"/><circle cx="9.800" cy="3.200" r="1.200" fill="#9fd0ff"/></svg>
<svg class="a" style="left:398px;top:558.500px" width="13.400" height="12" viewBox="0 0 13.400 12"><path d="M0 1.200h5l1.200 1.400H13.400V12H0z" fill="#f0b429"/><path d="M0 3.800h13.400V12H0z" fill="#ffd667"/><path d="M2.400 6.400h8.600V12H2.400z" fill="#2f7fd3"/><path d="M4.400 8.600h4.600V12H4.400z" fill="#ffd667"/></svg>
<svg class="a" style="left:427px;top:557.500px" width="13" height="13.400" viewBox="0 0 13 13.400"><path d="M0 3.800h13v9.600H0z" fill="#f3f3f3"/><path d="M4 3.800V2.300A1.600 1.600 0 0 1 5.600.7h1.800A1.600 1.600 0 0 1 9 2.300v1.500" fill="none" stroke="#f3f3f3" stroke-width="1"/><rect x="4" y="6.200" width="2.200" height="2.200" fill="#f25022"/><rect x="6.800" y="6.200" width="2.200" height="2.200" fill="#7fba00"/><rect x="4" y="9" width="2.200" height="2.200" fill="#00a4ef"/><rect x="6.800" y="9" width="2.200" height="2.200" fill="#ffb900"/></svg>
<svg class="a" style="left:455.400px;top:557.800px" width="13.400" height="13.400" viewBox="0 0 13.400 13.400"><circle cx="6.700" cy="6.700" r="6.600" fill="#1f7fd6"/><path d="M.3 7.700C.6 3 4 0 7.500.2c3.600.2 5.800 3 5.700 5.800-.1 1.800-1.500 2.800-3.200 2.800H6.200c0 2 2 3.400 4.800 2.400-1.400 2-4.600 2.800-7.200 1.600C1.600 11.800.3 9.800.3 7.700z" fill="#35c1a0" opacity=".85"/><path d="M4.200 8.200c0-2 1.400-3.400 3.200-3.400 1.600 0 2.600 1 2.600 2.200 0 .7-.4 1.200-1 1.400H6.200c0 1.200.8 2.200 1.800 2.600-2.200.4-3.800-1-3.800-2.800z" fill="#0c4f9e"/></svg>
<svg class="a" style="left:484px;top:558px" width="13" height="13" viewBox="0 0 13 13"><path d="M3.600.8l8.600 1.800-2.600 9.800L1 10.600z" fill="#aeb7bf"/><path d="M3.600.8l8.600 1.800-.5 1.800L3.100 2.600z" fill="#6f7b86"/><path d="M9.600 12.400l2-2.600-1.400.2z" fill="#dfe5ea"/></svg>
<div class="a" style="left:512.400px;top:557.400px;width:13.400px;height:13.400px;border-radius:50%;background:#f2e318;opacity:.92"></div>
<div class="a" style="left:507.5px;top:574.6px;width:23px;height:1.4px;background:#9fc3d6;"></div>
<svg class="a" style="left:542.500px;top:558px" width="13" height="13" viewBox="0 0 13 13"><path d="M6 .4l1.600 3.800 4.400.4-3.300 2.900 1 4.300L6 9.500l-3.700 2.300 1-4.300L0 4.600l4.400-.4z" fill="#8fa6c4"/><path d="M6.600 5.200l5 5-2.200.2 1.200 2.200-1 .4-1.200-2.200-1.600 1.400z" fill="#e9eef5" stroke="#456" stroke-width=".4"/></svg>
<svg class="a" style="left:569.800px;top:558.400px" width="14.400" height="12" viewBox="0 0 14.400 12"><path d="M0 4.400L7.200 0l7.200 4.400V12H0z" fill="#1272c4"/><path d="M0 4.400l7.200 4.400 7.200-4.400V12H0z" fill="#2a96e8"/><path d="M0 12l7.200-5.200L14.400 12z" fill="#1c84d8"/></svg>
<svg class="a" style="left:597px;top:557.600px" width="15" height="14" viewBox="0 0 15 14"><rect width="15" height="14" rx="1" fill="#262b2f"/><path d="M5.200 3l3.400 2.300-1.700 1.700L3.500 4.700zM8 6.600l3.400 2.300-3.900 2.700-1.700-1.100 2.200-1.600-1.500-1z" fill="#35d6bd"/></svg>
<div class="a" style="left:594px;top:574.6px;width:23px;height:1.4px;background:#9fc3d6;"></div>
<div class="a" style="left:621px;top:553.2px;width:27.5px;height:42.8px;background:#34434e;"></div>
<svg class="a" style="left:626.600px;top:557.600px" width="15" height="14" viewBox="0 0 15 14"><rect x="4" y=".6" width="10.600" height="12.800" rx=".8" fill="#1f9d57"/><path d="M9.300.6h5.300v6.400H9.300z" fill="#33c481"/><path d="M9.300 7h5.300v6.400H9.300z" fill="#107c41"/><rect x="0" y="3" width="8.400" height="8.400" rx=".8" fill="#0e6b37"/><text x="2.300" y="9.300" font-size="5.600" font-weight="bold" fill="#fff" font-family="Liberation Sans, sans-serif">X</text></svg>
<div class="a" style="left:621px;top:574.6px;width:27.5px;height:1.4px;background:#9fc3d6;"></div>
<svg class="a" style="left:656px;top:558.500px" width="15" height="12.400" viewBox="0 0 15 12.400"><rect x="0" y="1" width="10.400" height="7.600" rx="1.200" fill="#2aa3c9"/><path d="M10.400 3.600l4.200-2.200v6.800l-4.200-2.200z" fill="#2aa3c9"/><circle cx="5.200" cy="4.800" r="2" fill="#e6372e"/><path d="M3.400 8.600l-1 2.800h5.600l-1-2.800" fill="none" stroke="#2aa3c9" stroke-width=".9"/></svg>
<div class="a" style="left:652px;top:574.6px;width:24px;height:1.4px;background:#9fc3d6;"></div>
<svg class="a" style="left:724px;top:557px" width="110" height="14" viewBox="724 557 110 14"><path d="M726 566l2.400-2.400 2.400 2.400" fill="none" stroke="#cfcfcf" stroke-width=".9"/><rect x="745.500" y="561" width="5" height="6" fill="none" stroke="#bdbdbd" stroke-width=".8"/><rect x="765" y="562.400" width="6" height="3.600" fill="#d8d8d8"/><circle cx="787.500" cy="565.600" r="2.600" fill="#c0392b"/><path d="M803 565h5M805.500 562.500v5" stroke="#aaa" stroke-width=".8"/><path d="M822 569l5.600-8" stroke="#c4c4c4" stroke-width="1.100"/><path d="M824 561.400l3.600.8" stroke="#c4c4c4" stroke-width=".8"/></svg>
<span class="t" style="top:560.3px;font-size:9px;color:#e9e9e9;font-family:'Liberation Serif',serif;left:838.75px;">A</span>
<svg class="a" style="left:852.500px;top:558.500px" width="12" height="12" viewBox="0 0 12 12"><circle cx="5.600" cy="5.600" r="5" fill="#1f6fd0"/><circle cx="8.800" cy="8.600" r="2.200" fill="#e8a21a"/><circle cx="9.600" cy="9.400" r="1.100" fill="#d23b2c"/></svg>
<span class="t" style="top:556px;font-size:7.2px;color:#f0f0f0;left:883.45px;transform:scaleX(0.906);transform-origin:0 50%;">10:49</span>
<span class="t" style="top:566.6px;font-size:7.2px;color:#f0f0f0;left:873.50px;transform:scaleX(0.995);transform-origin:0 50%;">2021/05/03</span>
<svg class="a" style="left:919.500px;top:558.500px" width="11" height="11" viewBox="0 0 11 11"><path d="M.6.600h9.800v7.600H6.400L4.600 10.400V8.200H.6z" fill="#d5d5d5" stroke="#fff" stroke-width=".6"/><path d="M2.400 3h6.200M2.400 4.600h6.200M2.400 6.200h4" stroke="#566" stroke-width=".6"/></svg>
<div class="a" style="left:940.8px;top:553.2px;width:0.7px;height:22.8px;background:#7b8790;"></div>
</div></div>
<div class="a" style="left:0;top:464px;width:1024px;height:112px;background:linear-gradient(180deg,rgba(0,0,0,0.00) 0.0%,rgba(0,0,0,0.04) 5.4%,rgba(0,0,0,0.14) 14.3%,rgba(0,0,0,0.26) 23.2%,rgba(0,0,0,0.35) 32.1%,rgba(0,0,0,0.42) 41.1%,rgba(0,0,0,0.46) 50.0%,rgba(0,0,0,0.48) 57.1%,rgba(0,0,0,0.52) 72.3%,rgba(0,0,0,0.57) 100.0%)"></div>
<div class="a" id="ctl" style="left:0;top:0;width:1024px;height:576px;filter:blur(.3px)">
<span class="t" style="top:554.25px;font-size:21.5px;color:rgba(165,165,165,.80);left:702.00px;transform:scaleX(0.933);transform-origin:0 50%;">© 2021 saym.</span>
<svg class="a" style="left:8px;top:3px" width="10" height="10" viewBox="8 3 10 10"><path d="M9.800 8.100h6.400M9.800 8.100l3-3M9.800 8.100l3 3" fill="none" stroke="#e8e8e8" stroke-width="1.100"/></svg>
<svg class="a" style="left:3px;top:280px" width="9" height="16" viewBox="0 0 9 16"><path d="M8.200 1.600L1.700 8l6.500 6.400" fill="none" stroke="#c8c8c8" stroke-width="1.100"/></svg>
<svg class="a" style="left:0;top:510px" width="1024" height="13" viewBox="0 0 1024 13"><path d="M438 6.600H1011" stroke="rgba(255,255,255,.18)" stroke-width="1"/><path d="M13 6.700H427.500" stroke="#5cb4e9" stroke-width="1.800"/></svg>
<svg class="a" style="left:426px;top:510px" width="13" height="13" viewBox="0 0 13 13"><circle cx="6.500" cy="6.600" r="4.700" fill="rgba(255,255,255,.03)" stroke="#5cb4e9" stroke-width="1.500"/></svg>
<span class="t" style="top:526.6px;font-size:6.4px;color:#fff;left:12.90px;transform:scaleX(0.914);transform-origin:0 50%;">0:00:47</span>
<span class="t" style="top:526.6px;font-size:6.4px;color:#fff;left:990.80px;transform:scaleX(0.938);transform-origin:0 50%;">0:01:07</span>
<svg class="a" style="left:20px;top:541.500px" width="13" height="10.400" viewBox="0 0 13 10.400"><path d="M.8 3.400h1.800L5 .9v8.600L2.600 7H.8z" fill="none" stroke="#fff" stroke-width=".9" stroke-linejoin="round"/><path d="M6.800 3.600a2.400 2.400 0 0 1 0 3.200M8.300 2.200a4.400 4.400 0 0 1 0 6M9.900.9a6.400 6.400 0 0 1 0 8.600" fill="none" stroke="#fff" stroke-width=".8"/></svg>
<svg class="a" style="left:47px;top:541.600px" width="12" height="10.400" viewBox="0 0 12 10.400"><path d="M.8.700h10.200v6.900H3.600L1.800 9.600V7.600H.8z" fill="none" stroke="#fff" stroke-width=".9"/><path d="M2 4.300h7.800M2 5.900h7.800" stroke="#fff" stroke-width=".9"/></svg>
<svg class="a" style="left:478.500px;top:540.500px" width="14" height="12" viewBox="0 0 14 12"><path d="M1.800 4.600A5.200 5.200 0 0 1 12.200 6" fill="none" stroke="#fff" stroke-width="1"/><path d="M1 1.600v3.800h3.600z" fill="#fff"/><text x="7.400" y="11" font-size="6.600" font-weight="bold" fill="#fff" text-anchor="middle" font-family="Liberation Sans, sans-serif">10</text></svg>
<svg class="a" style="left:508.500px;top:541.500px" width="9" height="10.400" viewBox="0 0 9 10.400"><path d="M1 .9l6.400 4.300L1 9.500z" fill="none" stroke="#fff" stroke-width="1" stroke-linejoin="miter"/></svg>
<svg class="a" style="left:531.500px;top:540.500px" width="14" height="12" viewBox="0 0 14 12"><path d="M12.200 4.600A5.200 5.200 0 0 0 1.800 6" fill="none" stroke="#fff" stroke-width="1"/><path d="M13 1.600v3.800H9.400z" fill="#fff"/><text x="6.800" y="11" font-size="6.600" font-weight="bold" fill="#fff" text-anchor="middle" font-family="Liberation Sans, sans-serif">30</text></svg>
<svg class="a" style="left:912px;top:540.500px" width="12" height="12" viewBox="0 0 12 12"><path d="M1.600 8.400L8.400 1.400a1.300 1.300 0 0 1 1.900 0l.4.400a1.300 1.300 0 0 1 0 1.900L3.800 10.600 1 11.200z" fill="none" stroke="#fff" stroke-width="1"/><path d="M1.800 8.600l1.800 1.800" stroke="#fff" stroke-width=".8"/></svg>
<svg class="a" style="left:938.800px;top:542.600px" width="11.400" height="7.600" viewBox="0 0 11.400 7.600"><rect x=".5" y=".5" width="10.400" height="6.600" fill="rgba(255,255,255,.25)" stroke="#fff" stroke-width="1"/><rect x="4.600" y="2.600" width="4.800" height="3" fill="none" stroke="#fff" stroke-width=".8"/></svg>
<svg class="a" style="left:965px;top:540.800px" width="12.400" height="11.600" viewBox="0 0 12.400 11.600"><path d="M11.800.6L7.200 5M7.200 5V2M7.200 5h3M.6 11l4.400-4.400M5 6.600v3M5 6.600H2" fill="none" stroke="#fff" stroke-width=".9"/></svg>
<div class="a" style="left:993.6px;top:545.800px;width:1.500px;height:1.500px;background:#fff"></div>
<div class="a" style="left:997.8px;top:545.800px;width:1.500px;height:1.500px;background:#fff"></div>
<div class="a" style="left:1002px;top:545.800px;width:1.500px;height:1.500px;background:#fff"></div>
</div>
</div></body></html>
